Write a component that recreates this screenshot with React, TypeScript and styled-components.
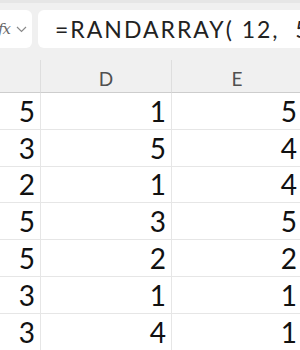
import React from "react";
import styled, { createGlobalStyle } from "styled-components";

const GlobalStyle = createGlobalStyle`
  html, body {
    margin: 0;
    padding: 0;
    background: #ffffff;
  }
  body {
    font-family: "Lato", "Liberation Sans", sans-serif;
  }
`;

const Page = styled.div`
  width: 300px;
  height: 350px;
  overflow: hidden;
  background: #ffffff;
`;

const FormulaBar = styled.div`
  display: flex;
  gap: 6px;
  padding: 10px 0 12px 0;
  background: #f0f0f0;
  border-top: 3px solid #e6e6e6;
  box-sizing: border-box;
  height: 60px;
`;

const NameBox = styled.div`
  flex: 0 0 32px;
  height: 38px;
  margin-top: -3px;
  background: #ffffff;
  border-radius: 0 6px 6px 0;
  display: flex;
  align-items: center;
  gap: 6px;
  color: #6a6a6a;
`;

const Fx = styled.span`
  font-family: "DejaVu Serif", "Liberation Serif", serif;
  font-style: italic;
  font-size: 15px;
  letter-spacing: -1px;
  margin-left: -2px;
`;

const FormulaInput = styled.div`
  flex: 1;
  height: 38px;
  margin-top: -3px;
  background: #ffffff;
  border-radius: 6px 0 0 6px;
  padding-left: 17px;
  display: flex;
  align-items: center;
  font-size: 23px;
  letter-spacing: 2px;
  color: #222222;
  white-space: pre;
  overflow: hidden;
`;

const Grid = styled.div`
  display: grid;
  grid-template-columns: 41px 131px 131px;
`;

const HeaderCell = styled.div`
  height: 33px;
  box-sizing: border-box;
  background: #f0f0f0;
  border-right: 1px solid #dedede;
  border-bottom: 1px solid #cdcdcd;
  display: flex;
  align-items: center;
  justify-content: center;
  padding-top: 5px;
  font-size: 19px;
  color: #505050;
`;

const Cell = styled.div`
  height: 36.8px;
  box-sizing: border-box;
  border-right: 1px solid #e6e6e6;
  border-bottom: 1px solid #e6e6e6;
  display: flex;
  align-items: center;
  justify-content: flex-end;
  padding-right: 5px;
  font-size: 28px;
  color: #111111;
`;

const rows = [
  [5, 1, 5],
  [3, 5, 4],
  [2, 1, 4],
  [5, 3, 5],
  [5, 2, 2],
  [3, 1, 1],
  [3, 4, 1],
];

export default function App() {
  return (
    <Page>
      <GlobalStyle />
      <FormulaBar>
        <NameBox>
          <Fx>fx</Fx>
          <svg width="11" height="7" viewBox="0 0 11 7">
            <path d="M1 1l4.5 4.5L10 1" fill="none" stroke="#8a8a8a" strokeWidth="1.2" />
          </svg>
        </NameBox>
        <FormulaInput>{"=RANDARRAY( 12,  5"}</FormulaInput>
      </FormulaBar>
      <Grid>
        <HeaderCell />
        <HeaderCell>D</HeaderCell>
        <HeaderCell>E</HeaderCell>
        {rows.map((r, i) =>
          r.map((v, j) => <Cell key={`${i}-${j}`}>{v}</Cell>)
        )}
      </Grid>
    </Page>
  );
}
